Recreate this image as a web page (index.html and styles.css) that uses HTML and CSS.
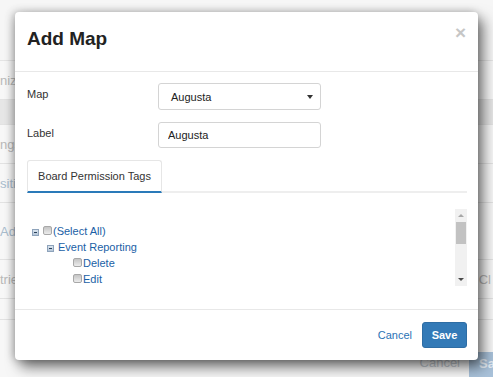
FILE: index.html
```html
<!DOCTYPE html>
<html lang="en">
<head>
    <meta charset="UTF-8">
    <meta name="viewport" content="width=device-width, initial-scale=1.0">
    <title>Add Map</title>
    <link rel="stylesheet" href="styles.css">
</head>
<body>
    <!-- page behind the dialog -->
    <div class="page">
        <div class="page-top"></div>
        <div class="page-row"><span class="ghost">nizations</span></div>
        <div class="page-row page-row-shade"></div>
        <div class="page-row"><span class="ghost">ngs</span></div>
        <div class="page-row"><span class="ghost ghost-link">sitions</span></div>
        <div class="page-row page-row-tall"><span class="ghost ghost-link">Add</span></div>
        <div class="page-row"><span class="ghost">tries</span><span class="ghost ghost-btn">Cl</span></div>
        <div class="page-row page-row-thin"></div>
        <div class="page-footer">
            <span class="ghost ghost-cancel">Cancel</span>
            <span class="ghost-save">Save</span>
        </div>
    </div>

    <div class="modal">
        <div class="modal-header">
            <h4 class="modal-title">Add Map</h4>
            <button class="close" type="button">&times;</button>
        </div>

        <div class="modal-body">
            <div class="form-row">
                <label class="form-label">Map</label>
                <div class="select-box">
                    <span>Augusta</span>
                    <span class="caret"></span>
                </div>
            </div>
            <div class="form-row">
                <label class="form-label">Label</label>
                <input class="text-input" type="text" value="Augusta">
            </div>

            <ul class="tabs">
                <li class="tab active">Board Permission Tags</li>
            </ul>

            <div class="tree-box">
                <div class="tree">
                    <div class="tree-node">
                        <span class="toggle"></span>
                        <span class="check"></span>
                        <span class="node-text">(Select All)</span>
                    </div>
                    <div class="tree-node level-1">
                        <span class="toggle"></span>
                        <span class="node-text">Event Reporting</span>
                    </div>
                    <div class="tree-node level-2">
                        <span class="check"></span>
                        <span class="node-text">Delete</span>
                    </div>
                    <div class="tree-node level-2">
                        <span class="check"></span>
                        <span class="node-text">Edit</span>
                    </div>
                </div>
                <div class="scrollbar">
                    <div class="scroll-up"></div>
                    <div class="scroll-track">
                        <div class="scroll-thumb"></div>
                    </div>
                    <div class="scroll-down"></div>
                </div>
            </div>
        </div>

        <div class="modal-footer">
            <a class="cancel-link" href="#">Cancel</a>
            <button class="save-button" type="button">Save</button>
        </div>
    </div>
</body>
</html>
```

FILE: styles.css
```css
body {
    margin: 0;
    width: 493px;
    height: 377px;
    overflow: hidden;
    position: relative;
    background: #f4f4f4;
    font-family: 'Liberation Sans', Arial, sans-serif;
    font-size: 11px;
    color: #333;
}

/* ---- background page ---- */

.page {
    display: flex;
    flex-direction: column;
    height: 100%;
}

.page-top {
    height: 60px;
    background: #f6f6f6;
    border-bottom: 1px solid #e4e4e4;
}

.page-row {
    height: 38px;
    display: flex;
    align-items: center;
    justify-content: space-between;
    border-bottom: 1px solid #e2e2e2;
    background: #f7f7f7;
}

.page-row-shade {
    height: 24px;
    background: #e6e6e6;
}

.page-row-tall {
    height: 56px;
}

.page-row-thin {
    height: 20px;
}

.ghost {
    color: #b9b9b9;
    font-size: 13px;
}

.ghost-link {
    color: #a9bccd;
}

.ghost-btn {
    margin-right: 2px;
}

.page-footer {
    flex: 1;
    display: flex;
    align-items: flex-end;
    justify-content: flex-end;
    background: #f7f7f7;
}

.ghost-cancel {
    color: #c3c9d0;
    margin: 0 9px 7px 0;
}

.ghost-save {
    height: 25px;
    width: 40px;
    box-sizing: border-box;
    padding: 4px 0 0 10px;
    margin-right: -16px;
    color: #e3ebf3;
    background: #a9c2da;
    font-size: 13px;
    font-weight: bold;
}

/* ---- dialog ---- */

.modal {
    position: absolute;
    left: 15px;
    top: 12px;
    width: 463px;
    height: 348px;
    background: #fff;
    border-radius: 4px;
    box-shadow: 5px 7px 14px rgba(0, 0, 0, 0.55), -2px 0 8px rgba(0, 0, 0, 0.25);
    display: flex;
    flex-direction: column;
}

.modal-header {
    height: 60px;
    box-sizing: border-box;
    padding: 16px 12px 0;
    border-bottom: 1px solid #e8e8e8;
    display: flex;
    justify-content: space-between;
    align-items: flex-start;
}

.modal-title {
    margin: 0;
    font-size: 19px;
    line-height: 22px;
    font-weight: bold;
    color: #222;
}

.close {
    border: none;
    background: none;
    padding: 0;
    margin-top: -6px;
    font-family: 'Liberation Sans', Arial, sans-serif;
    font-size: 19px;
    font-weight: bold;
    line-height: 22px;
    color: #c6c6c6;
    cursor: pointer;
}

.modal-body {
    padding: 11px 11px 22px 12px;
}

.form-row {
    display: flex;
    align-items: flex-start;
    margin-bottom: 12px;
}

.form-label {
    width: 131px;
    padding-top: 3px;
    line-height: 16px;
    color: #333;
}

.select-box {
    width: 163px;
    height: 27px;
    box-sizing: border-box;
    border: 1px solid #d4d4d4;
    border-radius: 3px;
    padding: 0 7px 0 12px;
    display: flex;
    align-items: center;
    justify-content: space-between;
    color: #222;
}

.caret {
    width: 0;
    height: 0;
    border-left: 3px solid transparent;
    border-right: 3px solid transparent;
    border-top: 4px solid #333;
}

.text-input {
    width: 163px;
    height: 26px;
    box-sizing: border-box;
    border: 1px solid #d4d4d4;
    border-radius: 3px;
    padding: 0 9px;
    font-family: 'Liberation Sans', Arial, sans-serif;
    font-size: 11px;
    color: #222;
}

.tabs {
    list-style: none;
    margin: 0;
    padding: 0;
    display: flex;
    border-bottom: 2px solid #eeeeee;
}

.tab {
    width: 135px;
    height: 33px;
    box-sizing: border-box;
    display: flex;
    align-items: center;
    justify-content: center;
    border: 1px solid #e6e6e6;
    border-bottom: none;
    border-radius: 3px 3px 0 0;
    color: #333;
    font-size: 11px;
}

.tab.active {
    margin-bottom: -2px;
    border-bottom: 2px solid #2a7ab9;
}

.tree-box {
    margin-top: 16px;
    height: 77px;
    display: flex;
    justify-content: space-between;
}

.tree {
    padding: 14px 0 0 5px;
}

.tree-node {
    height: 16px;
    display: flex;
    align-items: center;
    color: #1b5fa6;
    font-size: 11px;
}

.level-1 {
    padding-left: 15px;
}

.level-2 {
    padding-left: 41px;
}

.toggle {
    width: 5px;
    height: 5px;
    margin: 3px 4px 0 0;
    border: 1px solid #8ea3bb;
    background: linear-gradient(#dbe5ef, #b5c6d8);
    position: relative;
}

.toggle::after {
    content: "";
    position: absolute;
    left: 1px;
    top: 2px;
    width: 3px;
    height: 1px;
    background: #2a3f57;
}

.check {
    width: 7px;
    height: 7px;
    margin: -2px 1px 0 0;
    border: 1px solid #a8a8a8;
    border-radius: 2px;
    background: linear-gradient(#c4c4c4, #ececec);
}

.scrollbar {
    width: 12px;
    background: #f1f1f1;
    display: flex;
    flex-direction: column;
}

.scroll-up,
.scroll-down {
    height: 13px;
    display: flex;
    align-items: center;
    justify-content: center;
}

.scroll-up::before {
    content: "";
    border-left: 3px solid transparent;
    border-right: 3px solid transparent;
    border-bottom: 3px solid #a8a8a8;
}

.scroll-down::before {
    content: "";
    border-left: 3px solid transparent;
    border-right: 3px solid transparent;
    border-top: 3px solid #4a4a4a;
}

.scroll-track {
    flex: 1;
    padding: 0 1px;
}

.scroll-thumb {
    height: 22px;
    background: #c2c2c2;
}

.modal-footer {
    margin-top: auto;
    border-top: 1px solid #e8e8e8;
    padding: 12px 11px 12px;
    display: flex;
    justify-content: flex-end;
    align-items: center;
    gap: 10px;
}

.cancel-link {
    color: #2a72b5;
    text-decoration: none;
    font-size: 11px;
}

.save-button {
    width: 45px;
    height: 26px;
    border: 1px solid #2e6da4;
    border-radius: 3px;
    background: #337ab7;
    color: #fff;
    font-family: 'Liberation Sans', Arial, sans-serif;
    font-size: 11px;
    font-weight: bold;
    cursor: pointer;
}
```
